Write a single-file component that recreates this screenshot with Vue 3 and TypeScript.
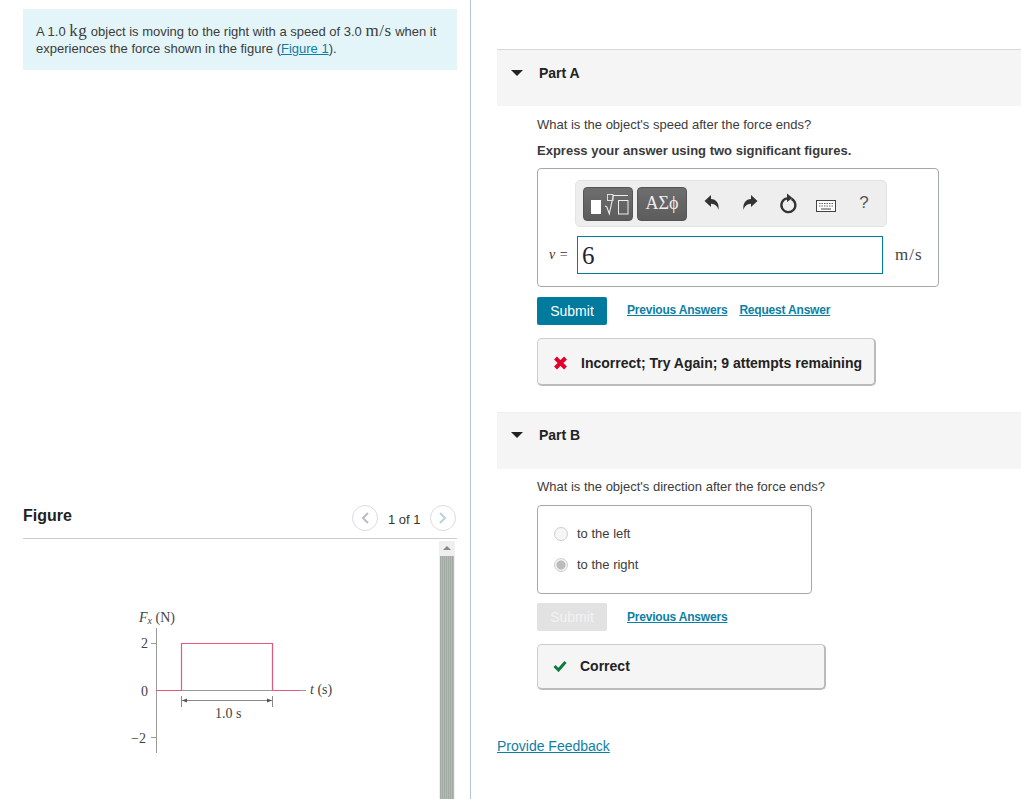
<script setup lang="ts">
const choices = [
  { label: 'to the left', selected: false },
  { label: 'to the right', selected: true },
]
</script>

<template>
  <div class="page">
    <section class="left">
      <div class="intro">
        A 1.0 <span class="math">kg</span> object is moving to the right with a speed of 3.0
        <span class="math">m/s</span> when it experiences the force shown in the figure
        (<a class="fig-link">Figure 1</a>).
      </div>
      <div class="fig-head">
        <h2>Figure</h2>
        <div class="pager">
          <span class="circle"><svg width="10" height="14" viewBox="0 0 10 14"><path d="M8 2 3 7l5 5" fill="none" stroke="#b9bdc4" stroke-width="2" /></svg></span>
          <span class="count">1 of 1</span>
          <span class="circle"><svg width="10" height="14" viewBox="0 0 10 14"><path d="M2 2l5 5-5 5" fill="none" stroke="#b9d3dc" stroke-width="2" /></svg></span>
        </div>
      </div>
      <div class="fig-body">
        <svg class="graph" width="416" height="258" viewBox="23 541 416 258">
          <g stroke="#999" stroke-width="1" fill="none">
            <path d="M156.5 628V753" />
            <path d="M151 643.5h5M151 737.5h5" />
            <path d="M156 690.5h150" />
            <path d="M181.5 696v11M272.5 696v11M182 700.5h90" stroke="#888" />
          </g>
          <path d="M156 690.5h25.500M181.500 690.500v-47h91v47M272.500 690.500H300" fill="none" stroke="#e4587c" stroke-width="1.2" />
          <path d="M182 700.5l5-2v4zM272 700.5l-5-2v4z" fill="#555" />
          <g class="gt">
            <text x="139" y="622"><tspan font-style="italic">F</tspan><tspan font-style="italic" font-size="10" dy="2">x</tspan><tspan dy="-2"> (N)</tspan></text>
            <text x="141" y="648">2</text>
            <text x="141" y="696">0</text>
            <text x="131" y="743">−2</text>
            <text x="310" y="694"><tspan font-style="italic">t</tspan> (s)</text>
            <text x="215" y="718">1.0 s</text>
          </g>
        </svg>
        <div class="scroll">
          <span class="up"></span>
          <span class="thumb"></span>
        </div>
      </div>
    </section>

    <section class="right">
      <header class="part">
        <span class="tri"></span><h3>Part A</h3>
      </header>
      <div class="content">
        <p class="q q-a">What is the object's speed after the force ends?</p>
        <p class="hint">Express your answer using two significant figures.</p>
        <div class="answer">
          <div class="toolbar">
            <button class="tb">
              <svg width="50" height="34" viewBox="0 0 50 34">
                <rect x="8" y="13" width="10" height="14" fill="#fff" />
                <path d="M22 19l1.800.8 2.500 7 4-18.300H45" fill="none" stroke="#eee" stroke-width="1.100" />
                <rect x="35.500" y="13.500" width="9.500" height="13.500" fill="none" stroke="#eee" />
                <rect x="24.500" y="7.500" width="5.500" height="6" fill="none" stroke="#ddd" />
              </svg>
            </button>
            <button class="tb sym">ΑΣϕ</button>
            <span class="tools">
              <span class="slot">
                <svg width="20" height="20" viewBox="0 0 20 20"><path d="M2.500 8 9 2v4c5 .2 8.500 4 7.500 11-1.200-4-3.300-6-7.500-6.200V14z" fill="#333" /></svg>
              </span>
              <span class="slot">
                <svg width="20" height="20" viewBox="0 0 20 20"><path d="M17.500 8 11 2v4c-5 .2-8.500 4-7.500 11 1.200-4 3.300-6 7.500-6.200V14z" fill="#333" /></svg>
              </span>
              <span class="slot">
                <svg width="20" height="22" viewBox="0 0 20 22">
                  <path d="M13.500 6.900A7 7 0 1 1 9 6.300" fill="none" stroke="#333" stroke-width="2.300" />
                  <path d="M9 1.500l5.500 4.500L9 10z" fill="#333" />
                </svg>
              </span>
              <span class="slot kbd">
                <svg width="20" height="14" viewBox="0 0 20 14">
                  <rect x=".5" y="1.500" width="19" height="11" fill="#fff" stroke="#444" />
                  <path d="M3 4.500h14M3 7h14" stroke="#666" stroke-dasharray="1.500 1" />
                  <path d="M5 10h10" stroke="#444" />
                </svg>
              </span>
              <span class="slot help">?</span>
            </span>
          </div>
          <div class="input-row">
            <span class="var"><i>v</i> =</span>
            <div class="input">6</div>
            <span class="unit">m/s</span>
          </div>
        </div>
        <div class="actions a1">
          <button class="submit">Submit</button>
          <span class="links"><a>Previous Answers</a><a>Request Answer</a></span>
        </div>
        <div class="feedback bad">
          <svg width="15" height="14" viewBox="0 0 15 14"><path d="M2.500 2l10 10M12.500 2l-10 10" stroke="#e0002b" stroke-width="4" /></svg>
          <strong>Incorrect; Try Again; 9 attempts remaining</strong>
        </div>
      </div>

      <header class="part part-b">
        <span class="tri"></span><h3>Part B</h3>
      </header>
      <div class="content">
        <p class="q">What is the object's direction after the force ends?</p>
        <div class="choices">
          <label v-for="c in choices" :key="c.label" class="choice">
            <span class="radio" :class="{ on: c.selected }"></span>{{ c.label }}
          </label>
        </div>
        <div class="actions a2">
          <button class="submit off">Submit</button>
          <span class="links"><a>Previous Answers</a></span>
        </div>
        <div class="feedback good">
          <svg width="14" height="12" viewBox="0 0 14 12"><path d="M1.500 6l4 4 7-8" fill="none" stroke="#0e7a3e" stroke-width="3" /></svg>
          <strong>Correct</strong>
        </div>
      </div>
      <a class="provide">Provide Feedback</a>
    </section>
  </div>
</template>

<style>
html, body { margin: 0; background: #fff; overflow: hidden; }
</style>

<style scoped>
.page { display: flex; width: 1021px; height: 799px; overflow: hidden; font-family: "Liberation Sans", Arial, sans-serif; color: #333; font-size: 13px; }
.left { width: 471px; height: 799px; flex: none; box-sizing: border-box; padding: 9px 13px 0 23px; border-right: 1px solid #b5c6d4; }
.intro { box-sizing: border-box; height: 61px; padding: 13px 13px 0; background: #e3f5f8; line-height: 17px; color: #3c3c3c; }
.math { font-family: "Liberation Serif", serif; font-size: 17px; letter-spacing: .5px; }
.fig-link { color: #0d7fa5; text-decoration: underline; }
.fig-head { display: flex; justify-content: space-between; align-items: center; height: 52px; margin-top: 417px; border-bottom: 1px solid #ccc; padding-top: 5px; box-sizing: border-box; }
.fig-head h2 { margin: 2px 0 0; font-size: 16px; font-weight: 700; color: #222; }
.pager { display: flex; align-items: center; gap: 10px; margin: 6px 1px 0 0; }
.circle { display: flex; align-items: center; justify-content: center; width: 26px; height: 26px; box-sizing: border-box; border: 1px solid #ddd; border-radius: 50%; }
.count { width: 32px; padding-top: 2px; text-align: center; white-space: nowrap; color: #333; font-size: 13px; }
.fig-body { display: flex; margin-top: 2px; height: 258px; }
.graph { flex: none; display: block; }
.gt text { font-family: "Liberation Serif", serif; font-size: 14px; fill: #444; }
.scroll { box-sizing: border-box; width: 16px; padding: 0 1px; flex: none; background: #efefef; display: flex; flex-direction: column; align-items: center; }
.up { width: 0; height: 0; margin: 5px 0 6px; border: 4px solid transparent; border-top: 0; border-bottom: 4px solid #888; }
.thumb { flex: 1; align-self: stretch; background: repeating-linear-gradient(90deg, #a3a9a3 0 1px, #b5bab5 1px 2px); }
.right { flex: 1; padding-left: 26px; padding-top: 49px; box-sizing: border-box; min-width: 0; }
.part { display: flex; align-items: center; height: 57px; box-sizing: border-box; padding-bottom: 11px; background: #f6f5f6; border-top: 1px solid #d8d8d8; }
.part-b { margin-top: 26px; padding-bottom: 13px; border-top-color: #f0f0f0; }
.tri { width: 0; height: 0; margin-left: 14px; border: 6px solid transparent; border-bottom: 0; border-top: 6px solid #222; }
.part h3 { margin: 0 0 0 16px; font-size: 14px; font-weight: 700; color: #222; }
.content { padding-left: 40px; }
.q { margin: 0; padding-top: 10px; line-height: 16px; color: #3c3c3c; }
.q-a { padding-top: 11px; }
.hint { margin: 10px 0 0; line-height: 16px; font-weight: 700; color: #3a3a3a; }
.answer { box-sizing: border-box; width: 402px; height: 119px; margin-top: 9px; border: 1px solid #a3aaa3; border-radius: 4px; padding: 11px 0 0 11px; }
.toolbar { display: flex; align-items: center; gap: 4px; width: 312px; height: 47px; box-sizing: border-box; margin-left: 26px; padding-left: 7px; background: #eee; border-radius: 5px; border: 1px solid #e3e3e3; }
.tb { width: 50px; height: 34px; padding: 0; display: flex; align-items: center; justify-content: center; color: #eee; border: 1px solid #555; border-radius: 4px; background: linear-gradient(#6e6e6e, #5c5c5c); }
.tb svg { flex: none; margin: -1px; }
.tb.sym { font-family: "Liberation Serif", serif; font-size: 18px; }
.tools { display: flex; align-items: center; margin-left: 2px; padding-bottom: 2px; }
.slot { display: flex; align-items: center; justify-content: center; width: 38px; }
.kbd { padding-top: 6px; }
.help { font-size: 17px; color: #555; }
.input-row { display: flex; align-items: center; margin-top: 9px; }
.var { width: 28px; font-family: "Liberation Serif", serif; font-size: 14px; letter-spacing: .5px; white-space: nowrap; color: #333; }
.input { box-sizing: border-box; width: 306px; height: 38px; border: 1px solid #007b9e; padding-left: 4px; line-height: 38px; font-family: "Liberation Serif", serif; font-size: 25px; color: #223; }
.unit { margin-left: 12px; font-family: "Liberation Serif", serif; font-size: 17px; letter-spacing: 1px; color: #444; }
.actions { display: flex; align-items: center; }
.a1 { margin-top: 10px; }
.a2 { margin-top: 9px; }
.a2 .links { margin-top: 0; }
.submit { width: 70px; height: 28px; padding: 0; background: #007b9e; color: #fff; border: 0; border-radius: 2px; font: 14px "Liberation Sans", Arial, sans-serif; }
.submit.off { background: #e2e2e2; color: #f2f2f2; }
.links { display: flex; gap: 12px; margin-left: 20px; margin-top: -2px; }
.links a { color: #0d7fa5; text-decoration: underline; font-size: 12px; font-weight: 700; letter-spacing: -.2px; }
.feedback { display: flex; align-items: center; box-sizing: border-box; border: 1px solid #ccc; border-bottom: 2px solid #bbb; border-right: 2px solid #bbb; border-radius: 5px; background: #f6f5f6; color: #222; font-size: 14px; }
.feedback.bad { width: 339px; height: 48px; margin-top: 13px; padding: 2px 0 0 15px; gap: 13px; }
.feedback.good { width: 289px; height: 46px; margin-top: 13px; padding: 0 0 2px 15px; gap: 13px; }
.choices { box-sizing: border-box; width: 275px; height: 89px; margin-top: 10px; padding-top: 12px; border: 1px solid #a3aaa3; border-radius: 4px; }
.choice { display: flex; align-items: center; height: 31px; padding-left: 16px; color: #3c3c3c; }
.radio { box-sizing: border-box; width: 14px; height: 14px; margin-right: 9px; border: 1px solid #cfcfcf; border-radius: 50%; background: #f6f6f6; }
.radio.on { background: radial-gradient(circle, #bbb 0 4px, #f2f2f2 5px); }
.provide { display: block; margin-top: 48px; color: #0d7fa5; text-decoration: underline; line-height: 16px; font-size: 14px; }
</style>
